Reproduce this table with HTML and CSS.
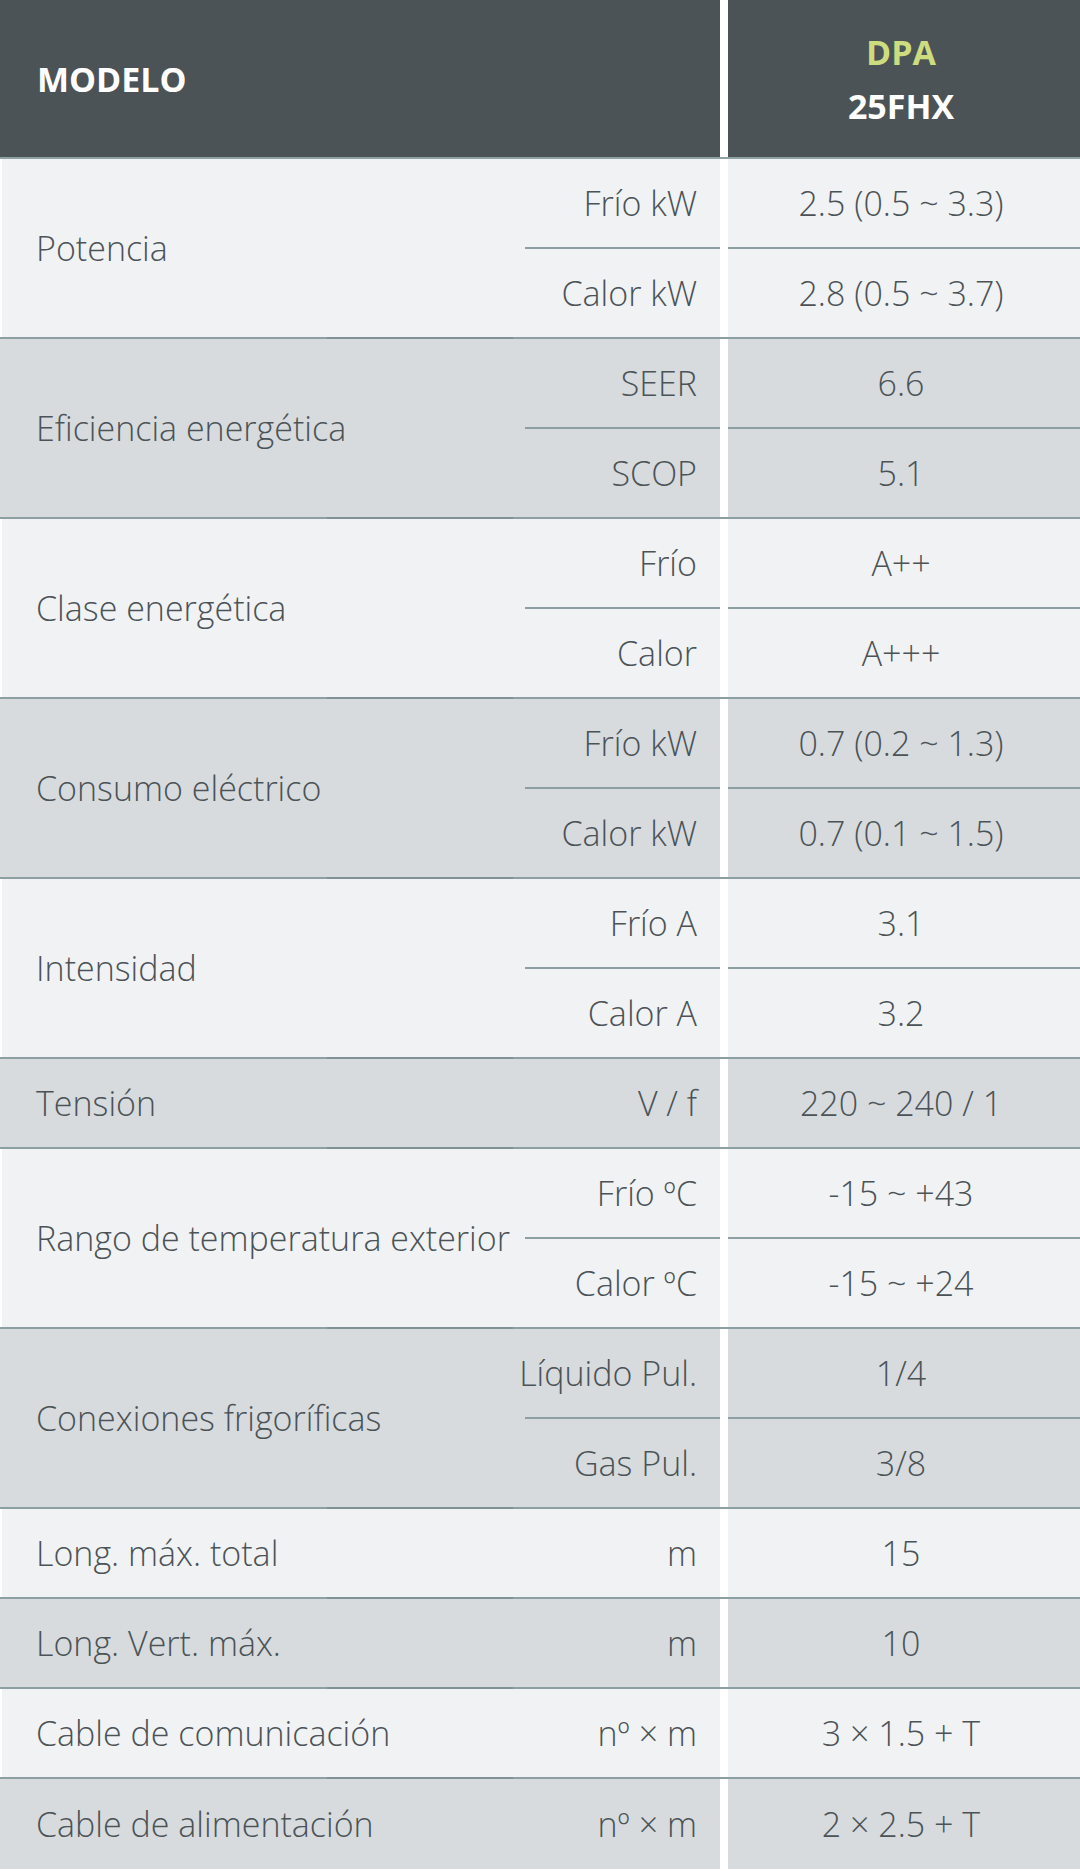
FILE: index.html
```html
<!DOCTYPE html>
<html lang="es">
<head>
<meta charset="utf-8">
<title>Especificaciones DPA 25FHX</title>
<link rel="stylesheet" href="styles.css">
</head>
<body>
<div class="table">
  <div class="head">
    <div class="h-model">MODELO</div>
    <div class="gap"></div>
    <div class="h-val"><span class="dpa">DPA</span><span>25FHX</span></div>
  </div>

  <div class="group light">
    <div class="label">Potencia</div>
    <div class="subs">
      <div class="sub"><div class="unit">Frío kW</div><div class="gap"></div><div class="val">2.5 (0.5 ~ 3.3)</div></div>
      <div class="sub"><div class="unit">Calor kW</div><div class="gap"></div><div class="val">2.8 (0.5 ~ 3.7)</div></div>
    </div>
  </div>

  <div class="group dark">
    <div class="label">Eficiencia energética</div>
    <div class="subs">
      <div class="sub"><div class="unit">SEER</div><div class="gap"></div><div class="val">6.6</div></div>
      <div class="sub"><div class="unit">SCOP</div><div class="gap"></div><div class="val">5.1</div></div>
    </div>
  </div>

  <div class="group light">
    <div class="label">Clase energética</div>
    <div class="subs">
      <div class="sub"><div class="unit">Frío</div><div class="gap"></div><div class="val">A++</div></div>
      <div class="sub"><div class="unit">Calor</div><div class="gap"></div><div class="val">A+++</div></div>
    </div>
  </div>

  <div class="group dark">
    <div class="label">Consumo eléctrico</div>
    <div class="subs">
      <div class="sub"><div class="unit">Frío kW</div><div class="gap"></div><div class="val">0.7 (0.2 ~ 1.3)</div></div>
      <div class="sub"><div class="unit">Calor kW</div><div class="gap"></div><div class="val">0.7 (0.1 ~ 1.5)</div></div>
    </div>
  </div>

  <div class="group light">
    <div class="label">Intensidad</div>
    <div class="subs">
      <div class="sub"><div class="unit">Frío A</div><div class="gap"></div><div class="val">3.1</div></div>
      <div class="sub"><div class="unit">Calor A</div><div class="gap"></div><div class="val">3.2</div></div>
    </div>
  </div>

  <div class="group dark">
    <div class="label">Tensión</div>
    <div class="subs">
      <div class="sub"><div class="unit">V / f</div><div class="gap"></div><div class="val">220 ~ 240 / 1</div></div>
    </div>
  </div>

  <div class="group light">
    <div class="label">Rango de temperatura exterior</div>
    <div class="subs">
      <div class="sub"><div class="unit">Frío ºC</div><div class="gap"></div><div class="val">-15 ~ +43</div></div>
      <div class="sub"><div class="unit">Calor ºC</div><div class="gap"></div><div class="val">-15 ~ +24</div></div>
    </div>
  </div>

  <div class="group dark">
    <div class="label">Conexiones frigoríficas</div>
    <div class="subs">
      <div class="sub"><div class="unit">Líquido Pul.</div><div class="gap"></div><div class="val">1/4</div></div>
      <div class="sub"><div class="unit">Gas Pul.</div><div class="gap"></div><div class="val">3/8</div></div>
    </div>
  </div>

  <div class="group light">
    <div class="label">Long. máx. total</div>
    <div class="subs">
      <div class="sub"><div class="unit">m</div><div class="gap"></div><div class="val">15</div></div>
    </div>
  </div>

  <div class="group dark">
    <div class="label">Long. Vert. máx.</div>
    <div class="subs">
      <div class="sub"><div class="unit">m</div><div class="gap"></div><div class="val">10</div></div>
    </div>
  </div>

  <div class="group light">
    <div class="label">Cable de comunicación</div>
    <div class="subs">
      <div class="sub"><div class="unit">nº × m</div><div class="gap"></div><div class="val">3 × 1.5 + T</div></div>
    </div>
  </div>

  <div class="group dark">
    <div class="label">Cable de alimentación</div>
    <div class="subs">
      <div class="sub"><div class="unit">nº × m</div><div class="gap"></div><div class="val">2 × 2.5 + T</div></div>
    </div>
  </div>
</div>
</body>
</html>
```
FILE: styles.css
```css
html, body {
  margin: 0;
  padding: 0;
  background: #ffffff;
}

body {
  font-family: "Open Sans", "Noto Sans", sans-serif;
  font-weight: 300;
  font-size: 34px;
  color: #4b5357;
}

.table {
  width: 1080px;
  display: flex;
  flex-direction: column;
}

.head {
  display: flex;
  height: 157px;
  border-bottom: 2px solid #8fa3a6;
  font-weight: 700;
  color: #ffffff;
}

.h-model {
  width: 720px;
  box-sizing: border-box;
  padding-left: 37px;
  background: #4b5357;
  display: flex;
  align-items: center;
  padding-top: 1px;
}

.gap {
  width: 8px;
  flex: 0 0 8px;
  background: #ffffff;
}

.h-val {
  flex: 1;
  background: #4b5357;
  display: flex;
  flex-direction: column;
  align-items: center;
  justify-content: center;
  line-height: 54px;
  padding-right: 6px;
}

.dpa {
  color: #cddc7e;
}

.group {
  position: relative;
  display: flex;
  border-top: 2px solid #8c9fa3;
}

.head + .group {
  border-top: 0;
}

.group::before {
  content: "";
  position: absolute;
  top: -2px;
  left: 327px;
  width: 186px;
  height: 2px;
  background: #7e9296;
}

.head + .group::before {
  display: none;
}

.light {
  background: #f1f2f4;
  box-shadow: inset 2px 0 0 #ffffff;
}

.dark {
  background: #d7dbde;
}

.label {
  flex: 1;
  display: flex;
  align-items: center;
  padding-left: 36px;
  white-space: nowrap;
}

.subs {
  width: 555px;
  display: flex;
  flex-direction: column;
}

.sub {
  display: flex;
  height: 88px;
}

.sub + .sub {
  height: 90px;
}

.group:last-child .sub {
  height: 90px;
}

.sub + .sub .unit,
.sub + .sub .val {
  border-top: 2px solid #8c9fa3;
}

.unit {
  width: 195px;
  box-sizing: border-box;
  padding-right: 23px;
  display: flex;
  align-items: center;
  justify-content: flex-end;
  white-space: nowrap;
}

.val {
  flex: 1;
  display: flex;
  align-items: center;
  justify-content: center;
  white-space: nowrap;
  padding-right: 6px;
}
```
